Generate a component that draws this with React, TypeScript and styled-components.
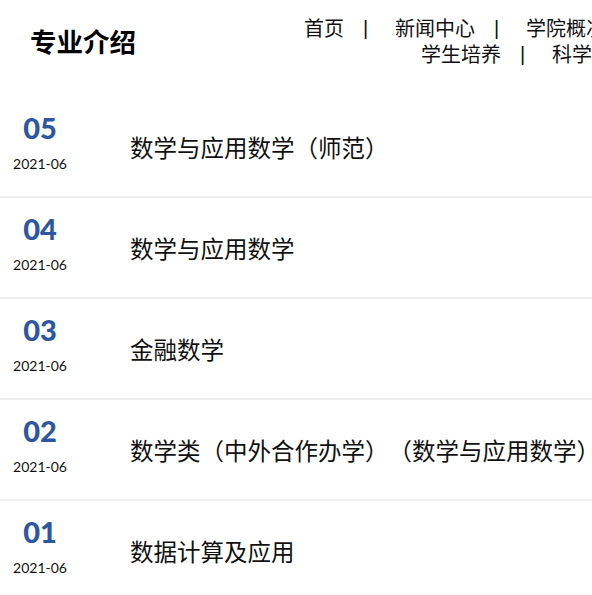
import React from "react";
import styled, { createGlobalStyle } from "styled-components";

const GlobalStyle = createGlobalStyle`
  html, body {
    margin: 0;
    padding: 0;
    background: #ffffff;
    overflow: hidden;
  }
  body {
    font-family: "Noto Sans CJK SC", "Noto Sans", sans-serif;
    color: #111;
    text-spacing-trim: space-all;
  }
`;

const Page = styled.div`
  width: 592px;
  overflow: hidden;
`;

const Header = styled.header`
  display: flex;
  align-items: flex-start;
  height: 97px;
  box-sizing: border-box;
  padding-left: 30px;
`;

const Title = styled.h1`
  margin: 28px 0 0 0;
  font-size: 26.5px;
  line-height: 26px;
  font-weight: 700;
  color: #000;
  white-space: nowrap;
  flex: none;
`;

const Nav = styled.nav`
  margin-left: 168px;
  margin-top: 15px;
  flex: none;
  display: flex;
  flex-direction: column;
`;

const NavLine = styled.div<{ $indent: number }>`
  display: flex;
  align-items: center;
  height: 26px;
  padding-left: ${(p) => p.$indent}px;
  white-space: nowrap;
`;

const NavItem = styled.a`
  font-size: 20px;
  line-height: 26px;
  color: #111;
  text-decoration: none;
`;

const Sep = styled.span`
  display: inline-block;
  width: 51px;
  box-sizing: border-box;
  padding-left: 19px;
  font-family: "Liberation Sans", sans-serif;
  font-size: 20px;
  color: #111;
`;

const List = styled.ul`
  list-style: none;
  margin: 0;
  padding: 0;
`;

const Row = styled.li`
  display: flex;
  align-items: center;
  height: 99px;
  border-bottom: 2px solid #eeeeee;
`;

const DateCol = styled.div`
  width: 80px;
  flex: none;
  display: flex;
  flex-direction: column;
  align-items: center;
  padding-bottom: 9px;
`;

const Num = styled.div`
  font-family: "Lato", "Noto Sans", sans-serif;
  font-size: 29px;
  font-weight: 900;
  line-height: 32px;
  color: #2d57a0;
`;

const DateText = styled.div`
  margin-top: 11px;
  font-family: "Lato", "Noto Sans", sans-serif;
  font-size: 14px;
  line-height: 18px;
  color: #111;
`;

const ItemTitle = styled.a`
  margin-left: 50px;
  font-size: 23.5px;
  line-height: 30px;
  color: #111;
  text-decoration: none;
  white-space: nowrap;
`;

const navLines = [
  { indent: 0, items: ["首页", "新闻中心", "学院概况", "师资队伍"] },
  { indent: 117, items: ["学生培养", "科学研究", "党建工作"] },
];

const items = [
  { num: "05", date: "2021-06", title: "数学与应用数学（师范）" },
  { num: "04", date: "2021-06", title: "数学与应用数学" },
  { num: "03", date: "2021-06", title: "金融数学" },
  { num: "02", date: "2021-06", title: "数学类（中外合作办学）（数学与应用数学）" },
  { num: "01", date: "2021-06", title: "数据计算及应用" },
];

export default function App() {
  return (
    <>
      <GlobalStyle />
      <Page>
        <Header>
          <Title>专业介绍</Title>
          <Nav>
            {navLines.map((line, li) => (
              <NavLine key={li} $indent={line.indent}>
                {line.items.map((it, i) => (
                  <React.Fragment key={it}>
                    {i > 0 && <Sep>|</Sep>}
                    <NavItem href="#">{it}</NavItem>
                  </React.Fragment>
                ))}
              </NavLine>
            ))}
          </Nav>
        </Header>
        <List>
          {items.map((it) => (
            <Row key={it.num}>
              <DateCol>
                <Num>{it.num}</Num>
                <DateText>{it.date}</DateText>
              </DateCol>
              <ItemTitle href="#">{it.title}</ItemTitle>
            </Row>
          ))}
        </List>
      </Page>
    </>
  );
}
